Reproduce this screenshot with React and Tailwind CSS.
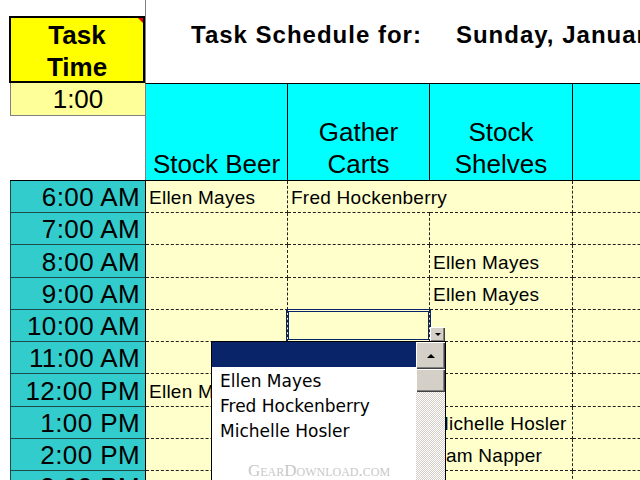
const rows = [
  { t: '6:00 AM', h: 'h-[32px]', c: ['Ellen Mayes', 'Fred Hockenberry', '', ''], span: true },
  { t: '7:00 AM', h: 'h-[32px]', c: ['', '', '', ''] },
  { t: '8:00 AM', h: 'h-[33px]', c: ['', '', 'Ellen Mayes', ''] },
  { t: '9:00 AM', h: 'h-[32px]', c: ['', '', 'Ellen Mayes', ''] },
  { t: '10:00 AM', h: 'h-[32px]', c: ['', '', '', ''] },
  { t: '11:00 AM', h: 'h-[32px]', c: ['', '', '', ''] },
  { t: '12:00 PM', h: 'h-[33px]', c: ['Ellen Mayes', '', '', ''] },
  { t: '1:00 PM', h: 'h-[32px]', c: ['', '', 'Michelle Hosler', ''] },
  { t: '2:00 PM', h: 'h-[32px]', c: ['', '', 'Sam Napper', ''] },
  { t: '3:00 PM', h: 'h-[32px]', c: ['', '', '', ''] },
]

const colW = ['w-[142px]', 'w-[142px]', 'w-[143px]', 'w-[142px]']
const heads = [['Stock Beer'], ['Gather', 'Carts'], ['Stock', 'Shelves'], []]

const bevel =
  'bg-[#d4d0c8] shadow-[inset_1px_1px_0_#ffffff,inset_-1px_-1px_0_#404040,inset_-2px_-2px_0_#808080]'

function App() {
  return (
    <div className="relative w-[640px] h-[480px] overflow-hidden bg-white text-black font-['Liberation_Sans',Arial,sans-serif]">
      {/* title band */}
      <div className="flex h-[83px]">
        <div className="w-[145px] shrink-0 pl-[9px] pt-[16px]">
          <div className="relative h-[67px] w-[136px] border-2 border-black bg-[#ffff00] pt-[1px] text-center text-[26px] font-bold leading-[32px]">
            Task
            <br />
            Time
            <div className="absolute right-0 top-0 h-0 w-0 border-l-[5px] border-t-[5px] border-l-transparent border-t-[#e00000]" />
          </div>
        </div>
        <div className="flex-1 border-l border-[#808080] pl-[45px] pt-[19px] whitespace-nowrap text-[24px] font-bold leading-[32px] tracking-[1px]">
          <span>Task Schedule for:</span>
          <span className="ml-[34px]">Sunday, January 1, 2006</span>
        </div>
      </div>

      {/* column headers */}
      <div className="flex h-[97px]">
        <div className="w-[145px] shrink-0 pl-[10px]">
          <div className="flex h-[33px] w-[135px] items-end justify-center border-b border-l border-[#808080] bg-[#ffff99] pb-[1px] text-[26px] leading-[30px]">
            1:00
          </div>
        </div>
        <div className="flex flex-1 border-l border-t border-l-[#808080] border-t-black bg-[#00ffff]">
          {heads.map((h, i) => (
            <div
              key={i}
              className={`${colW[i]} shrink-0 flex flex-col items-center justify-end border-r border-black text-[26px] leading-[32px] whitespace-nowrap`}
            >
              {h.map((l) => (
                <span key={l}>{l}</span>
              ))}
            </div>
          ))}
        </div>
      </div>

      {/* schedule grid */}
      <div className="ml-[10px] border-t border-black">
        {rows.map((r) => (
          <div key={r.t} className={`flex ${r.h}`}>
            <div className="flex w-[136px] shrink-0 items-end justify-end border-b border-l border-r border-b-[#1d4a4a] border-l-[#1d4a4a] border-r-black bg-[#33cccc] pr-[5px] text-[26px] leading-[30px] tracking-[0.4px]">
              {r.t}
            </div>
            {r.c.map((v, i) => (
              <div
                key={i}
                className={`${colW[i]} shrink-0 flex items-end border-b border-dashed border-[#222] bg-[#ffffcc] pb-[3px] pl-[3px] text-[19px] leading-[22px] tracking-[0.25px] whitespace-nowrap ${
                  r.span && i === 1 ? 'border-r-0' : 'border-r'
                }`}
              >
                {v && <span className="relative z-10">{v}</span>}
              </div>
            ))}
          </div>
        ))}
      </div>

      {/* active cell */}
      <div className="absolute z-20 left-[286px] top-[309px] h-[33px] w-[145px] border-[3px] border-double border-[#0a246a]" />
      <div className={`absolute z-20 left-[430px] top-[327px] flex h-[15px] w-[15px] items-center justify-center ${bevel}`}>
        <div className="h-0 w-0 border-l-[3px] border-r-[3px] border-t-[3px] border-l-transparent border-r-transparent border-t-black" />
      </div>

      {/* validation list */}
      <div className="absolute z-30 left-[211px] top-[341px] flex h-[145px] w-[235px] border border-black bg-white">
        <div className="flex-1">
          <div className="h-[25px] bg-[#0a246a]" />
          <div className="pl-[8px] pt-[2px] text-[17px] leading-[25px] font-['DejaVu_Sans',sans-serif]">
            <div>Ellen Mayes</div>
            <div>Fred Hockenberry</div>
            <div>Michelle Hosler</div>
          </div>
        </div>
        <div className="flex w-[29px] flex-col bg-[repeating-conic-gradient(#d4d0c8_0_25%,#ffffff_0_50%)] bg-[length:2px_2px]">
          <div className={`flex h-[27px] items-center justify-center ${bevel}`}>
            <div className="h-0 w-0 border-b-[4px] border-l-[4px] border-r-[4px] border-b-black border-l-transparent border-r-transparent" />
          </div>
          <div className={`h-[23px] ${bevel}`} />
        </div>
      </div>

      <div className="absolute z-40 left-[248px] top-[462px] text-[17px] leading-[18px] text-[#c8c8c8] [font-variant:small-caps] font-['Liberation_Serif',serif]">
        GearDownload.com
      </div>
    </div>
  )
}

export default App
